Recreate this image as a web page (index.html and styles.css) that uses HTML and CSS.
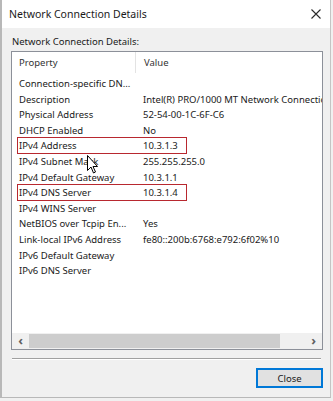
FILE: index.html
```html
<!DOCTYPE html>
<html lang="en">

<head>
    <meta charset="UTF-8">
    <title>Network Connection Details</title>
    <link rel="stylesheet" href="styles.css">
</head>

<body>
    <div class="window">
        <div class="titlebar">
            <div class="title">Network Connection Details</div>
            <svg class="close-x" width="10" height="10" viewBox="0 0 10 10">
                <path d="M0.5 0.5 L9.5 9.5 M9.5 0.5 L0.5 9.5" stroke="#2b2b2b" stroke-width="1.1" fill="none" />
            </svg>
        </div>

        <div class="content">
            <div class="label">Network Connection Details:</div>

            <div class="listbox">
                <div class="list-header">
                    <div class="col-prop">Property</div>
                    <div class="col-value">Value</div>
                </div>

                <div class="rows">
                    <div class="row"><div class="col-prop">Connection-specific DN...</div><div class="col-value"></div></div>
                    <div class="row"><div class="col-prop">Description</div><div class="col-value">Intel(R) PRO/1000 MT Network Connection</div></div>
                    <div class="row"><div class="col-prop">Physical Address</div><div class="col-value">52-54-00-1C-6F-C6</div></div>
                    <div class="row"><div class="col-prop">DHCP Enabled</div><div class="col-value">No</div></div>
                    <div class="row"><span class="mark"></span><div class="col-prop">IPv4 Address</div><div class="col-value">10.3.1.3</div></div>
                    <div class="row"><div class="col-prop">IPv4 Subnet Mask</div><div class="col-value">255.255.255.0</div></div>
                    <div class="row"><div class="col-prop">IPv4 Default Gateway</div><div class="col-value">10.3.1.1</div></div>
                    <div class="row"><span class="mark"></span><div class="col-prop">IPv4 DNS Server</div><div class="col-value">10.3.1.4</div></div>
                    <div class="row"><div class="col-prop">IPv4 WINS Server</div><div class="col-value"></div></div>
                    <div class="row"><div class="col-prop">NetBIOS over Tcpip En...</div><div class="col-value">Yes</div></div>
                    <div class="row"><div class="col-prop">Link-local IPv6 Address</div><div class="col-value">fe80::200b:6768:e792:6f02%10</div></div>
                    <div class="row"><div class="col-prop">IPv6 Default Gateway</div><div class="col-value"></div></div>
                    <div class="row"><div class="col-prop">IPv6 DNS Server</div><div class="col-value"></div></div>
                </div>

                <div class="hscroll">
                    <div class="arrow">&#8249;</div>
                    <div class="track"><div class="thumb"></div></div>
                    <div class="arrow">&#8250;</div>
                </div>
            </div>

            <div class="separator"></div>

            <div class="buttons">
                <button class="btn">Close</button>
            </div>
        </div>

        <svg class="cursor" width="12" height="19" viewBox="0 0 12 19">
            <path d="M0.5 0.5 L0.5 15.5 L4 12 L6.5 18 L8.5 17 L6 11.5 L10.5 11.5 Z" fill="#ffffff" stroke="#000000" stroke-width="1" stroke-linejoin="round" />
        </svg>
    </div>
</body>
</html>
```

FILE: styles.css
```css
body {
    margin: 0;
    padding: 0;
    background-color: #f0f0f0;
    font-family: 'Noto Sans', sans-serif;
    color: #1a1a1a;
}

.window {
    position: relative;
    width: 331px;
    height: 398px;
    box-sizing: border-box;
    border-left: 2px solid #b8b8b8;
    border-right: 1px solid #c4c4c4;
    border-bottom: 1px solid #b8b8b8;
    background-color: #f0f0f0;
    display: flex;
    flex-direction: column;
}

.titlebar {
    height: 28px;
    background-color: #ffffff;
    display: flex;
    align-items: center;
    justify-content: space-between;
    padding: 0 9px 0 7px;
}

.title {
    font-size: 10.5px;
    color: #1a1a1a;
}

.content {
    flex: 1;
    display: flex;
    flex-direction: column;
    padding: 7px 7px 0 9px;
}

.label {
    font-size: 9.5px;
    line-height: 14px;
    margin-left: 1px;
}

.listbox {
    margin-top: 2px;
    height: 299px;
    box-sizing: border-box;
    border: 1px solid #8c9099;
    background-color: #ffffff;
    display: flex;
    flex-direction: column;
    overflow: hidden;
}

.list-header,
.row {
    display: flex;
    font-size: 9.5px;
    white-space: nowrap;
}

.list-header {
    height: 21px;
    align-items: center;
    color: #333333;
}

.list-header .col-prop {
    border-right: 1px solid #e3e3e3;
    height: 100%;
    display: flex;
    align-items: center;
}

.col-prop {
    width: 116px;
    flex-shrink: 0;
    padding-left: 7px;
}

.col-value {
    padding-left: 8px;
}

.rows {
    flex: 1;
    padding-top: 3px;
}

.row {
    position: relative;
    height: 15.6px;
    line-height: 15.6px;
}

.mark {
    position: absolute;
    left: 5px;
    top: -1px;
    width: 170px;
    height: 17px;
    box-sizing: border-box;
    border: 1px solid #b8282f;
}

.hscroll {
    height: 16px;
    display: flex;
    background-color: #f0f0f0;
}

.arrow {
    width: 17px;
    text-align: center;
    font-size: 13px;
    line-height: 15px;
    color: #606060;
    font-weight: 700;
}

.track {
    flex: 1;
    padding: 1px 0;
}

.thumb {
    width: 251px;
    height: 100%;
    background-color: #cdcdcd;
}

.separator {
    margin: 8px 2px 0 1px;
    height: 1px;
    background-color: #a0a0a0;
    border-bottom: 1px solid #ffffff;
}

.buttons {
    display: flex;
    justify-content: flex-end;
    margin-top: 8px;
}

.btn {
    width: 67px;
    height: 20px;
    border: 1px solid #0078d7;
    box-shadow: inset 0 0 0 1px #0078d7;
    background-color: #e1e1e1;
    font-family: 'Noto Sans', sans-serif;
    font-size: 9.5px;
    color: #1a1a1a;
    padding: 0;
}

.cursor {
    position: absolute;
    left: 85px;
    top: 155px;
}
```
